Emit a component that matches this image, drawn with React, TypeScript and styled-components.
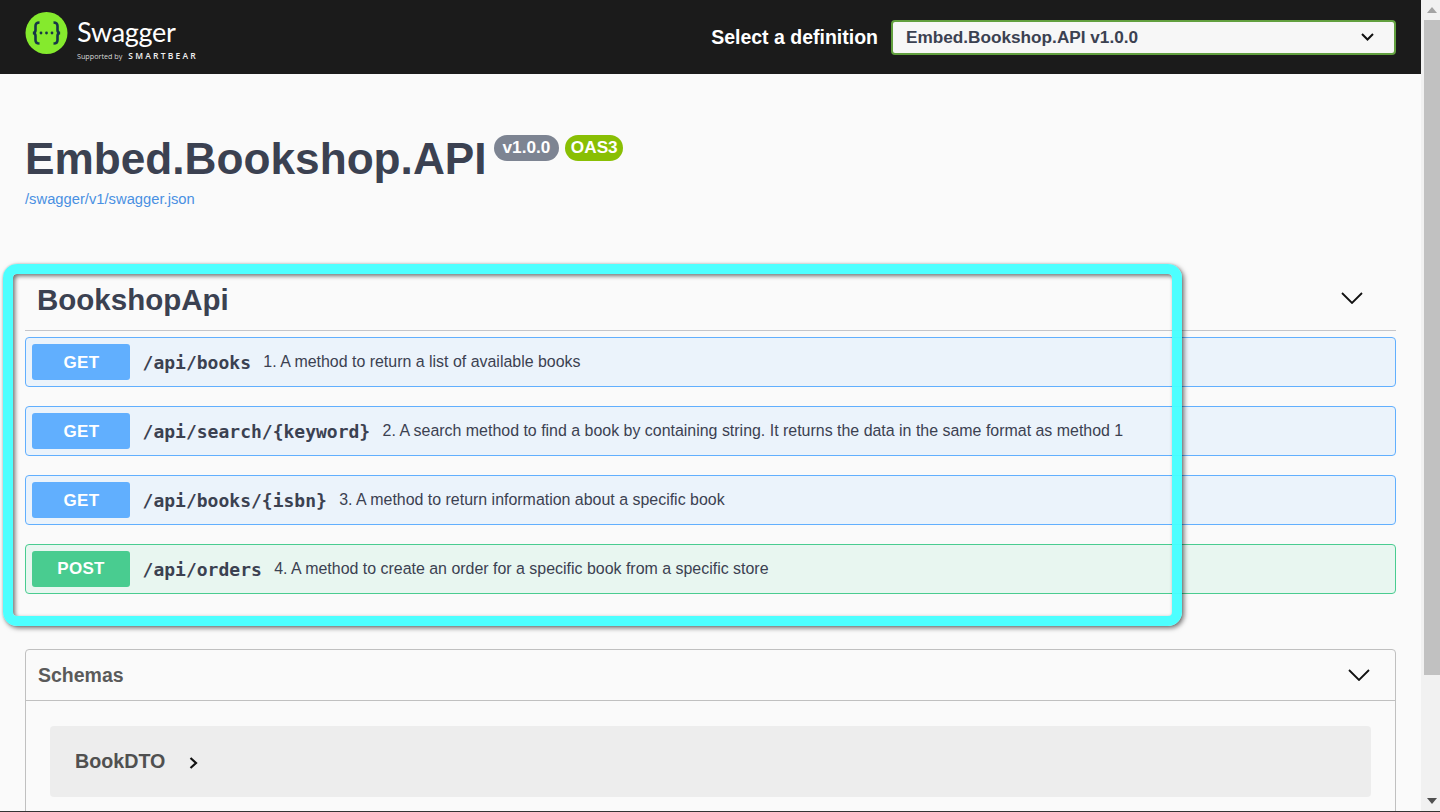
import React from "react";
import styled, { createGlobalStyle } from "styled-components";

const Global = createGlobalStyle`
  html, body { margin: 0; padding: 0; height: 100%; overflow: hidden; background: #fafafa; }
  * { box-sizing: border-box; }
  #root { height: 812px; }
`;

const Page = styled.div`
  display: flex;
  width: 1440px;
  height: 812px;
  overflow: hidden;
  border-bottom: 1px solid #333;
  font-family: "Liberation Sans", Arial, sans-serif;
  color: #3b4151;
  background: #fafafa;
`;

const Main = styled.div`
  position: relative;
  width: 1421px;
  height: 811px;
  overflow: hidden;
  flex: none;
`;

const TopBar = styled.header`
  height: 74px;
  background: #1b1b1b;
  display: flex;
  align-items: center;
  justify-content: space-between;
  padding: 0 25px;
`;

const Logo = styled.div`
  display: flex;
  align-items: flex-start;
  gap: 9px;
  height: 50px;
`;

const LogoWords = styled.div`
  display: flex;
  flex-direction: column;
  color: #fff;
`;

const LogoName = styled.span`
  font-family: Lato, sans-serif;
  font-weight: 400;
  font-size: 27px;
  line-height: 36px;
  letter-spacing: -0.3px;
  margin-top: 2px;
`;

const LogoSub = styled.span`
  display: flex;
  align-items: center;
  gap: 6px;
  font-family: "Open Sans", sans-serif;
  font-size: 7.2px;
  line-height: 10px;
  margin-top: 1px;
  color: #d8d8d8;
`;

const LogoBrand = styled.b`
  font-size: 8.5px;
  font-weight: 600;
  letter-spacing: 2.2px;
  color: #f0f0f0;
`;

const Picker = styled.div`
  display: flex;
  align-items: center;
  gap: 13px;
`;

const PickerLabel = styled.span`
  color: #fff;
  font-weight: 700;
  font-size: 19.5px;
`;

const Select = styled.div`
  width: 505px;
  height: 35px;
  border: 2px solid #62a03f;
  border-radius: 4px;
  background: #f7f7f7;
  display: flex;
  align-items: center;
  justify-content: space-between;
  padding: 0 20px 0 13px;
  font-weight: 700;
  font-size: 17.2px;
  color: #3b4151;
`;

const Info = styled.section`
  padding: 60px 25px 0;
  height: 190px;
`;

const TitleRow = styled.div`
  display: flex;
  align-items: flex-start;
`;

const Title = styled.h1`
  margin: 0;
  font-size: 44.2px;
  line-height: 50px;
  font-weight: 700;
  color: #3b4151;
`;

const Badge = styled.span<{ $oas?: boolean }>`
  height: 26px;
  margin: 1px 0 0 ${(p) => (p.$oas ? 6 : 7)}px;
  padding: 0 ${(p) => (p.$oas ? 5.5 : 9)}px;
  border-radius: 13px;
  background: ${(p) => (p.$oas ? "#89bf04" : "#7d8492")};
  color: #fff;
  font-weight: 700;
  font-size: 17.2px;
  line-height: 25px;
`;

const SpecLink = styled.a`
  display: block;
  margin-top: 6px;
  font-size: 14.75px;
  line-height: 18px;
  color: #4990e2;
`;

const Section = styled.section`
  padding: 0 25px;
`;

const TagHeader = styled.div`
  display: flex;
  align-items: center;
  justify-content: space-between;
  height: 67px;
  padding: 5px 33px 0 12px;
  border-bottom: 1px solid #c4c5ca;
  margin-bottom: 6px;
`;

const TagName = styled.h2`
  margin: 0;
  font-size: 29.5px;
  font-weight: 700;
  color: #3b4151;
`;

const TagToggle = styled.span`
  display: flex;
  margin-bottom: 3px;
`;

const OpList = styled.div`
  display: flex;
  flex-direction: column;
  gap: 19px;
`;

const Op = styled.div<{ $post?: boolean }>`
  display: flex;
  align-items: center;
  height: 50px;
  padding: 0 6px;
  border: 1px solid ${(p) => (p.$post ? "#49cc90" : "#61affe")};
  border-radius: 4px;
  background: ${(p) => (p.$post ? "#e8f6f0" : "#ebf3fb")};
`;

const Method = styled.span<{ $post?: boolean }>`
  flex: none;
  width: 98px;
  height: 36px;
  padding: ${(p) => (p.$post ? "0" : "1px 0 0 1px")};
  border-radius: 3px;
  background: ${(p) => (p.$post ? "#49cc90" : "#61affe")};
  color: #fff;
  font-weight: 700;
  font-size: 17px;
  display: flex;
  align-items: center;
  justify-content: center;
  letter-spacing: 0.3px;
`;

const Path = styled.span`
  margin-left: 12.6px;
  font-family: "DejaVu Sans Mono", monospace;
  font-weight: 700;
  font-size: 18px;
  color: #3b4151;
`;

const Desc = styled.span`
  margin-left: 12.4px;
  font-size: 15.95px;
  color: #3b4151;
`;

const Models = styled.section`
  margin: 55px 25px 0;
  height: 200px;
  border: 1px solid #c0c0c0;
  border-radius: 4px;
`;

const ModelsHeader = styled.div`
  display: flex;
  align-items: center;
  justify-content: space-between;
  height: 50px;
  margin-bottom: 25px;
  padding: 0 25px 0 12px;
  border-bottom: 1px solid #c0c0c0;
  font-weight: 700;
  font-size: 19.5px;
  color: #5a5a5a;
  height: 51px;
`;

const ModelRow = styled.div`
  display: flex;
  align-items: center;
  gap: 24px;
  height: 71px;
  margin: 0 24px;
  padding: 0 25px;
  border-radius: 4px;
  background: #ededed;
  font-weight: 700;
  font-size: 19.7px;
  color: #505050;
`;

const ModelToggle = styled.span`
  display: flex;
  margin-top: 3px;
`;

const Highlight = styled.div`
  position: absolute;
  left: 3px;
  top: 264px;
  width: 1179px;
  height: 362px;
  border: 10px solid rgba(70, 255, 255, 0.96);
  border-radius: 14px;
  box-shadow: 2px 2px 5px rgba(0, 0, 0, 0.55), 0 0 2px rgba(0, 0, 0, 0.2), inset 2px 2px 4px rgba(0, 0, 0, 0.55);
  pointer-events: none;
`;

const ScrollBar = styled.div`
  width: 19px;
  height: 811px;
  flex: none;
  background: #f1f1f1;
  display: flex;
  flex-direction: column;
  align-items: center;
  padding-left: 2px;
`;

const ScrollArrowBox = styled.div`
  height: 20px;
  flex: none;
  display: flex;
  align-items: center;
  justify-content: center;
  width: 17px;
`;

const ScrollThumb = styled.div`
  width: 16px;
  height: 655px;
  flex: none;
  background: #c1c1c1;
`;

const ScrollSpacer = styled.div`
  flex: 1;
`;

const Chevron = ({ w, h }: { w: number; h: number }) => (
  <svg width={w} height={h} viewBox="0 0 22 12" fill="none">
    <path d="M1 1 L11 11 L21 1" stroke="#111" strokeWidth="1.8" />
  </svg>
);

const rows = [
  { m: "GET", p: "/api/books", d: "1. A method to return a list of available books" },
  { m: "GET", p: "/api/search/{keyword}", d: "2. A search method to find a book by containing string. It returns the data in the same format as method 1" },
  { m: "GET", p: "/api/books/{isbn}", d: "3. A method to return information about a specific book" },
  { m: "POST", p: "/api/orders", d: "4. A method to create an order for a specific book from a specific store" },
];

export default function App() {
  return (
    <Page>
      <Global />
      <Main>
        <TopBar>
          <Logo>
            <svg width="43" height="42" viewBox="0 0 42 42">
              <circle cx="21" cy="21" r="21" fill="#85ea2d" />
              <path
                d="M14 10.5c-3 0-4 1.2-4 3.6v4.2c0 1.6-.8 2.4-2.4 2.7 1.6.3 2.4 1.1 2.4 2.7v4.2c0 2.4 1 3.6 4 3.6M28 10.5c3 0 4 1.2 4 3.6v4.2c0 1.6.8 2.4 2.4 2.7-1.6.3-2.4 1.1-2.4 2.7v4.2c0 2.4-1 3.6-4 3.6"
                fill="none"
                stroke="#173647"
                strokeWidth="2.6"
              />
              <circle cx="15.5" cy="21" r="1.4" fill="#173647" />
              <circle cx="21" cy="21" r="1.4" fill="#173647" />
              <circle cx="26.5" cy="21" r="1.4" fill="#173647" />
            </svg>
            <LogoWords>
              <LogoName>Swagger</LogoName>
              <LogoSub>
                Supported by <LogoBrand>SMARTBEAR</LogoBrand>
              </LogoSub>
            </LogoWords>
          </Logo>
          <Picker>
            <PickerLabel>Select a definition</PickerLabel>
            <Select>
              Embed.Bookshop.API v1.0.0
              <svg width="13" height="8" viewBox="0 0 13 8" fill="none">
                <path d="M1 1 L6.5 6.5 L12 1" stroke="#111" strokeWidth="2" />
              </svg>
            </Select>
          </Picker>
        </TopBar>
        <Info>
          <TitleRow>
            <Title>Embed.Bookshop.API</Title>
            <Badge>v1.0.0</Badge>
            <Badge $oas>OAS3</Badge>
          </TitleRow>
          <SpecLink>/swagger/v1/swagger.json</SpecLink>
        </Info>
        <Section>
          <TagHeader>
            <TagName>BookshopApi</TagName>
            <TagToggle>
              <Chevron w={22} h={12} />
            </TagToggle>
          </TagHeader>
          <OpList>
            {rows.map((r) => (
              <Op key={r.p} $post={r.m === "POST"}>
                <Method $post={r.m === "POST"}>{r.m}</Method>
                <Path>{r.p}</Path>
                <Desc>{r.d}</Desc>
              </Op>
            ))}
          </OpList>
        </Section>
        <Models>
          <ModelsHeader>
            Schemas
            <Chevron w={22} h={12} />
          </ModelsHeader>
          <ModelRow>
            BookDTO
            <ModelToggle>
              <svg width="9" height="12" viewBox="0 0 9 12" fill="none">
                <path d="M1.5 1 L7 6 L1.5 11" stroke="#111" strokeWidth="2.2" />
              </svg>
            </ModelToggle>
          </ModelRow>
        </Models>
        <Highlight />
      </Main>
      <ScrollBar>
        <ScrollArrowBox>
          <svg width="10" height="6" viewBox="0 0 10 6">
            <path d="M5 0 L10 6 H0 Z" fill="#a3a3a3" />
          </svg>
        </ScrollArrowBox>
        <ScrollThumb />
        <ScrollSpacer />
        <ScrollArrowBox>
          <svg width="10" height="6" viewBox="0 0 10 6">
            <path d="M0 0 H10 L5 6 Z" fill="#505050" />
          </svg>
        </ScrollArrowBox>
      </ScrollBar>
    </Page>
  );
}
